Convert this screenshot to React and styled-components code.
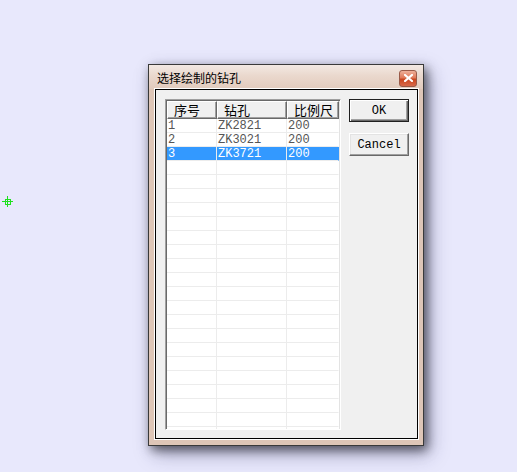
import React from "react";
import styled, { createGlobalStyle } from "styled-components";

const GlobalStyle = createGlobalStyle`
  html, body { margin: 0; padding: 0; }
  body {
    background: #e8e8fc;
    width: 517px;
    height: 472px;
    overflow: hidden;
    font-family: "Liberation Mono", "Noto Sans CJK SC", monospace;
  }
`;

const Desktop = styled.div`
  position: relative;
  width: 517px;
  height: 472px;
  box-sizing: border-box;
  padding: 64px 0 0 148px;
`;

const Crosshair = styled.svg`
  position: absolute;
  left: 2px;
  top: 196px;
  shape-rendering: crispEdges;
`;

const Window = styled.div`
  width: 276px;
  height: 382px;
  box-sizing: border-box;
  border: 1px solid #3a3a3a;
  background: #dec6b7;
  display: flex;
  flex-direction: column;
  box-shadow: 3px 4px 10px rgba(0, 0, 0, 0.55), 6px 8px 18px rgba(40, 40, 90, 0.35);
`;

const TitleBar = styled.div`
  height: 24px;
  flex: none;
  display: flex;
  align-items: center;
  justify-content: space-between;
  padding: 0 6px 0 8px;
  background: linear-gradient(180deg, #f3e9e3 0%, #ead8cd 45%, #e2cbbd 100%);
`;

const Title = styled.span`
  font-family: "Noto Sans CJK SC", sans-serif;
  font-size: 12px;
  color: #000;
  line-height: 24px;
  padding-top: 1px;
`;

const CloseButton = styled.div`
  width: 18px;
  height: 17px;
  box-sizing: border-box;
  border: 1px solid #9a5a48;
  border-radius: 3px;
  background: linear-gradient(180deg, #eeb09a 0%, #e07a5a 45%, #c9461f 55%, #d8694a 100%);
  display: flex;
  align-items: center;
  justify-content: center;
  margin-top: 2px;
`;

const Client = styled.div`
  flex: 1;
  margin: 0 5px 6px 6px;
  border: 1px solid #000;
  box-shadow: 0 0 0 1px #fff;
  background: #f0f0f0;
  display: flex;
  align-items: flex-start;
  gap: 8px;
  padding: 9px 0 0 9px;
`;

const ListBox = styled.div`
  width: 176px;
  height: 331px;
  box-sizing: border-box;
  border-top: 1px solid #a0a0a0;
  border-left: 1px solid #a0a0a0;
  border-right: 1px solid #fff;
  border-bottom: 1px solid #fff;
  box-shadow: inset 1px 1px 0 #696969, inset -1px -1px 0 #e3e3e3;
  padding: 1px;
  background: #fff;
  overflow: hidden;
`;

const Grid = styled.div`
  display: grid;
  grid-template-columns: 50px 70px 52px;
  grid-auto-rows: 14px;
  grid-template-rows: 18px;
`;

const HeadCell = styled.div`
  box-sizing: border-box;
  background: #f0f0f0;
  border-top: 1px solid #fff;
  border-left: 1px solid #fff;
  border-right: 1px solid #696969;
  border-bottom: 1px solid #696969;
  box-shadow: inset -1px -1px 0 #a0a0a0;
  font-family: "Noto Sans CJK SC", sans-serif;
  font-size: 13px;
  line-height: 16px;
  color: #000;
  padding-left: 6px;
  white-space: nowrap;
  overflow: hidden;
`;

const Cell = styled.div`
  box-sizing: border-box;
  border-right: 1px solid ${(p) => (p.$last ? "transparent" : "#ececec")};
  border-bottom: 1px solid #ececec;
  background: ${(p) => (p.$selected ? "#3399ff" : "#fff")};
  color: ${(p) => (p.$selected ? "#fff" : "#555")};
  font-family: "Liberation Mono", monospace;
  font-size: 12px;
  line-height: 13px;
  padding: 1px 0 0 1px;
  white-space: nowrap;
  overflow: hidden;
`;

const ButtonColumn = styled.div`
  display: flex;
  flex-direction: column;
  gap: 11px;
`;

const Button = styled.div`
  width: 60px;
  height: 23px;
  box-sizing: border-box;
  background: #f0f0f0;
  border: 1px solid ${(p) => (p.$default ? "#202020" : "#fff")};
  border-right-color: ${(p) => (p.$default ? "#202020" : "#696969")};
  border-bottom-color: ${(p) => (p.$default ? "#202020" : "#696969")};
  box-shadow: ${(p) =>
    p.$default
      ? "inset 1px 1px 0 #fff, inset -1px -1px 0 #696969, inset -2px -2px 0 #a0a0a0"
      : "inset -1px -1px 0 #a0a0a0, inset 1px 1px 0 #e3e3e3"};
  display: flex;
  align-items: center;
  justify-content: center;
  font-family: "Liberation Mono", monospace;
  font-size: 12px;
  color: #000;
`;

const headers = ["序号", "钻孔", "比例尺"];
const rows = [
  ["1", "ZK2821", "200"],
  ["2", "ZK3021", "200"],
  ["3", "ZK3721", "200"],
];
const selectedIndex = 2;
const totalRows = 24;

export default function App() {
  const allRows = Array.from({ length: totalRows }, (_, i) => rows[i] || ["", "", ""]);
  return (
    <>
      <GlobalStyle />
      <Desktop>
        <Crosshair width="11" height="11" viewBox="0 0 11 11">
          <rect x="3" y="3" width="5" height="5" fill="none" stroke="#1fe01f" strokeWidth="1" />
          <rect x="0" y="5" width="11" height="1" fill="#1fe01f" />
          <rect x="5" y="0" width="1" height="11" fill="#1fe01f" />
        </Crosshair>
        <Window>
          <TitleBar>
            <Title>选择绘制的钻孔</Title>
            <CloseButton>
              <svg width="9" height="8" viewBox="0 0 9 8">
                <path d="M1 1 L8 7 M8 1 L1 7" stroke="#fff" strokeWidth="2.2" strokeLinecap="square" />
              </svg>
            </CloseButton>
          </TitleBar>
          <Client>
            <ListBox>
              <Grid>
                {headers.map((h) => (
                  <HeadCell key={h}>{h}</HeadCell>
                ))}
                {allRows.map((r, i) =>
                  r.map((c, j) => (
                    <Cell key={`${i}-${j}`} $selected={i === selectedIndex} $last={j === 2}>
                      {c}
                    </Cell>
                  ))
                )}
              </Grid>
            </ListBox>
            <ButtonColumn>
              <Button $default>OK</Button>
              <Button>Cancel</Button>
            </ButtonColumn>
          </Client>
        </Window>
      </Desktop>
    </>
  );
}
